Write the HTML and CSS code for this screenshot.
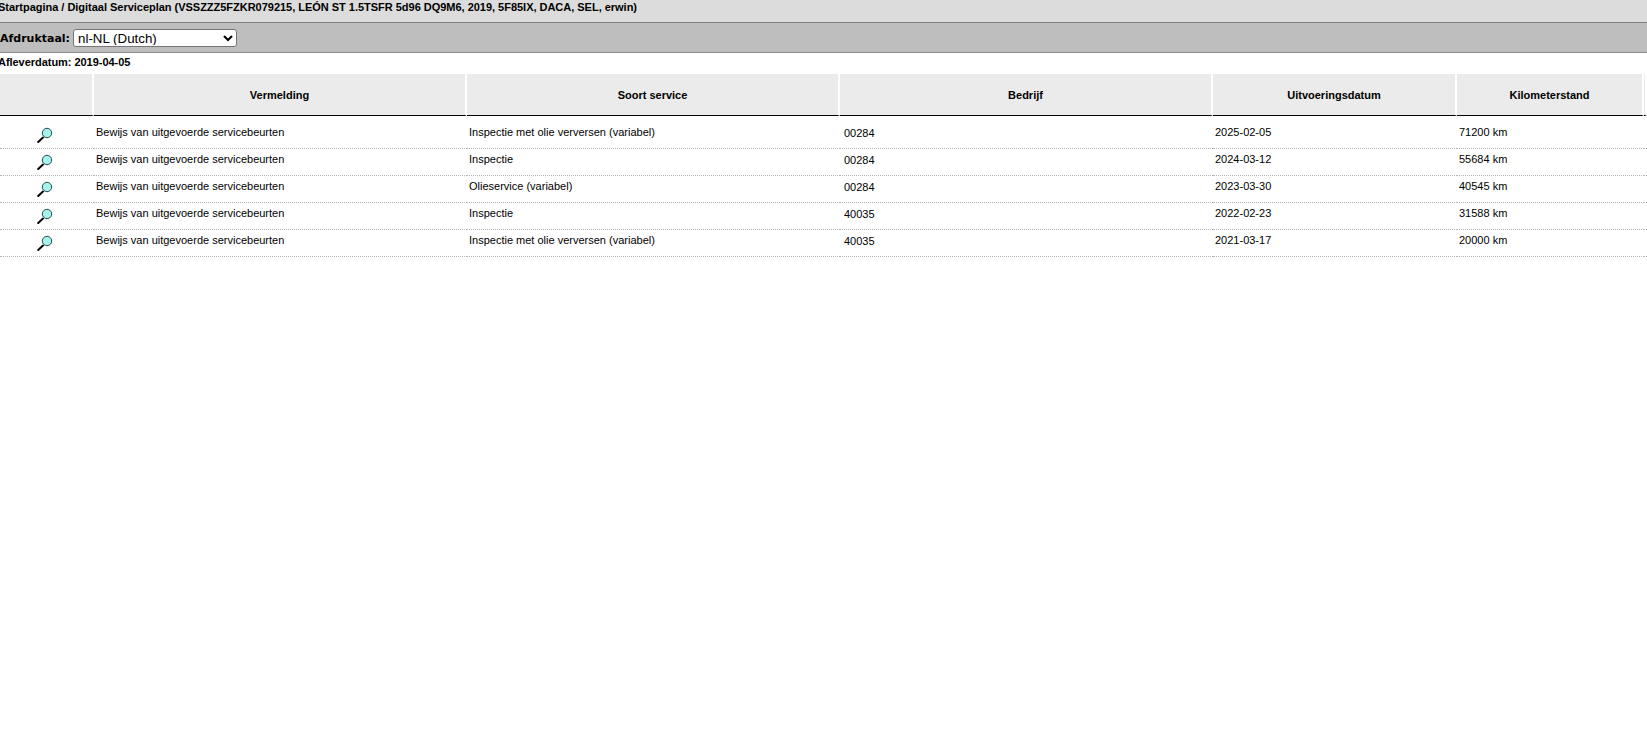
FILE: index.html
```html
<!DOCTYPE html>
<html lang="nl">
<head>
<meta charset="utf-8">
<title>Digitaal Serviceplan</title>
<link rel="stylesheet" href="styles.css">
</head>
<body>
<svg class="defs" width="0" height="0" aria-hidden="true">
  <symbol id="loupe" viewBox="0 0 16 16">
    <path d="M1.2 15 L6 10.6" stroke="#000" stroke-width="2" stroke-linecap="round" fill="none"/>
    <circle cx="10" cy="6" r="4.7" fill="#a4f4ee" stroke="#2a4a4a" stroke-width="1"/>
  </symbol>
</svg>
<div class="crumb">Startpagina / Digitaal Serviceplan (VSSZZZ5FZKR079215, LEÓN ST 1.5TSFR 5d96 DQ9M6, 2019, 5F85IX, DACA, SEL, erwin)</div>
<div class="toolbar">
  <label class="lang-label" for="lang">Afdruktaal:</label>
  <select id="lang" class="lang"><option>nl-NL (Dutch)</option></select>
</div>
<div class="delivery">Afleverdatum: 2019-04-05</div>
<table class="grid">
  <colgroup>
    <col class="c-icon"><col class="c-wide"><col class="c-wide"><col class="c-wide"><col class="c-date"><col class="c-km"><col>
  </colgroup>
  <thead>
    <tr><th></th><th>Vermelding</th><th>Soort service</th><th>Bedrijf</th><th>Uitvoeringsdatum</th><th>Kilometerstand</th><th></th></tr>
  </thead>
  <tbody>
    <tr><td class="ic"><svg class="loupe"><use href="#loupe"/></svg></td><td>Bewijs van uitgevoerde servicebeurten</td><td>Inspectie met olie verversen (variabel)</td><td class="co">00284</td><td>2025-02-05</td><td>71200 km</td><td></td></tr>
    <tr><td class="ic"><svg class="loupe"><use href="#loupe"/></svg></td><td>Bewijs van uitgevoerde servicebeurten</td><td>Inspectie</td><td class="co">00284</td><td>2024-03-12</td><td>55684 km</td><td></td></tr>
    <tr><td class="ic"><svg class="loupe"><use href="#loupe"/></svg></td><td>Bewijs van uitgevoerde servicebeurten</td><td>Olieservice (variabel)</td><td class="co">00284</td><td>2023-03-30</td><td>40545 km</td><td></td></tr>
    <tr><td class="ic"><svg class="loupe"><use href="#loupe"/></svg></td><td>Bewijs van uitgevoerde servicebeurten</td><td>Inspectie</td><td class="co">40035</td><td>2022-02-23</td><td>31588 km</td><td></td></tr>
    <tr><td class="ic"><svg class="loupe"><use href="#loupe"/></svg></td><td>Bewijs van uitgevoerde servicebeurten</td><td>Inspectie met olie verversen (variabel)</td><td class="co">40035</td><td>2021-03-17</td><td>20000 km</td><td></td></tr>
  </tbody>
</table>
</body>
</html>
```
FILE: styles.css
```css
html, body { margin: 0; padding: 0; background: #fff; overflow: hidden; }
body { font-family: "Liberation Sans", Arial, sans-serif; font-size: 11px; color: #000; }
.defs { display: block; height: 0; }
.crumb { height: 23px; box-sizing: border-box; padding-top: 1px; text-indent: -2px; line-height: 13px; font-weight: bold; letter-spacing: -0.02px; background: #dcdcdc; border-bottom: 1px solid #7f7f7f; white-space: nowrap; }
.toolbar { height: 30px; box-sizing: border-box; padding-top: 1px; display: flex; align-items: center; gap: 3px; background: #bebebe; border-bottom: 1px solid #8c8c8c; }
.lang-label { font-family: "DejaVu Sans", Verdana, sans-serif; font-size: 11px; font-weight: bold; }
.lang { width: 164px; height: 18px; font-family: "Liberation Sans", Arial, sans-serif; font-size: 13.33px; background: #fff; border: 1px solid #767676; border-radius: 3px; padding: 0 0 1px; }
.delivery { height: 21px; line-height: 19px; font-weight: bold; text-indent: -2px; letter-spacing: -0.04px; }
.grid { table-layout: fixed; width: 1647px; border-collapse: separate; border-spacing: 0; }
.c-icon { width: 94px; }
.c-wide { width: 373px; }
.c-date { width: 244px; }
.c-km { width: 187px; }
th { height: 42px; box-sizing: border-box; padding: 0; background: #ebebeb; font-weight: bold; text-align: center; border-right: 2px solid #fff; border-bottom: 1px solid #000; }
td { height: 27px; box-sizing: border-box; padding: 0 0 6px 2px; white-space: nowrap; border-bottom: 1px dotted #b4b4b4; }
tbody tr:first-child td { height: 33px; padding-top: 6px; }
td.co { padding: 0 0 4px 4px; }
tbody tr:first-child td.co { padding-top: 6px; }
td.ic, tbody tr:first-child td.ic { padding: 0; vertical-align: top; }
.loupe { display: block; width: 16px; height: 16px; margin: 5px 0 0 37px; }
tbody tr:first-child .loupe { margin-top: 11px; }
```
